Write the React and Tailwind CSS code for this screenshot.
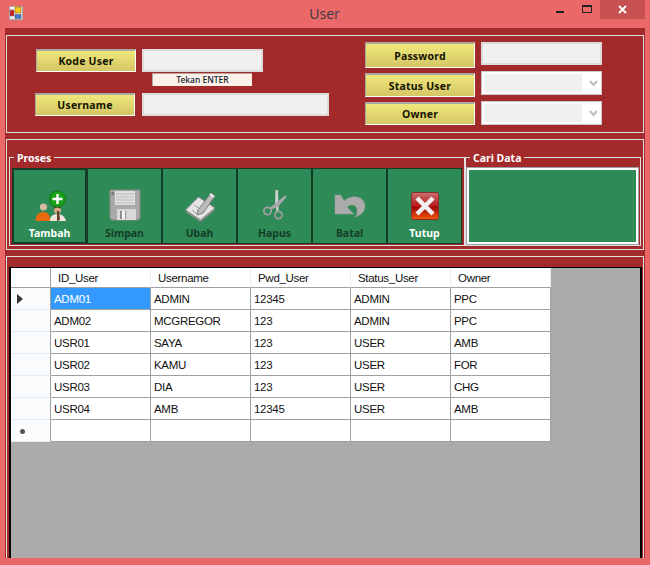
const comic = "font-['Noto_Sans',sans-serif] font-bold";
const sans = "font-['Liberation_Sans',Arial,sans-serif]";

const rows = [
  ["ADM01", "ADMIN", "12345", "ADMIN", "PPC"],
  ["ADM02", "MCGREGOR", "123", "ADMIN", "PPC"],
  ["USR01", "SAYA", "123", "USER", "AMB"],
  ["USR02", "KAMU", "123", "USER", "FOR"],
  ["USR03", "DIA", "123", "USER", "CHG"],
  ["USR04", "AMB", "12345", "USER", "AMB"],
  ["", "", "", "", ""],
];
const heads = ["ID_User", "Username", "Pwd_User", "Status_User", "Owner"];

function AppIcon() {
  return (
    <svg width="14" height="14" viewBox="0 0 14 14">
      <rect x="0.5" y="0.5" width="13" height="13" fill="#eee" stroke="#aaa" />
      <rect x="1" y="4" width="4" height="6" fill="#c62020" stroke="#777" strokeWidth="0.5" />
      <rect x="6" y="1" width="6" height="6" fill="#f5c518" stroke="#a07010" strokeWidth="0.6" />
      <rect x="6" y="8.5" width="6" height="4" fill="#3f78d0" stroke="#555" strokeWidth="0.5" />
    </svg>
  );
}

function Label({ children, className }) {
  return (
    <div className={`flex items-center justify-center pt-[2px] bg-gradient-to-b from-[#efe87a] to-[#d5c566] border-t-2 border-l border-t-[#a8a8a0] border-l-[#a8a8a0] border-b border-r border-b-white border-r-white text-[10.5px] tracking-[0.2px] text-[#141400] ${comic} ${className}`}>
      {children}
    </div>
  );
}

function Input({ className }) {
  return <div className={`border-2 border-[#dcdcdc] bg-[#f0f0f0] ${className}`} />;
}

function Select({ className }) {
  return (
    <div className={`flex items-center w-[121px] h-[24px] bg-white border border-[#c8c8c8] pl-[2px] ${className}`}>
      <div className="w-[98px] h-[18px] bg-[#f0f0f0]" />
      <svg className="ml-[7px]" width="9" height="7" viewBox="0 0 9 7">
        <path d="M1 1 L4.5 5 L8 1" fill="none" stroke="#bdbdbd" strokeWidth="2" />
      </svg>
    </div>
  );
}

function IconTambah() {
  return (
    <svg width="36" height="36" viewBox="0 0 36 36">
      <circle cx="11.5" cy="19" r="3.6" fill="#d8b8a0" />
      <path d="M3.5 33 C3.5 27 7 24 11.5 24 C15 24 18.5 27 18.5 33 Z" fill="#ea6a10" />
      <path d="M18 33 C18 28 21 26 25.5 26 C30 26 33 29 34 33 Z" fill="#f0e6dc" />
      <circle cx="25.5" cy="22" r="3.6" fill="#d8a888" />
      <path d="M25 23 L27 23 L28 32 L25 33 Z" fill="#6a3a20" />
      <path d="M22 21 C22 16 29 16 29 21 C27 19 24 19 22 21 Z" fill="#5a3018" />
      <circle cx="25.5" cy="11" r="8" fill="#18a018" stroke="#0c7a10" />
      <path d="M25.5 6 V16 M20.5 11 H30.5" stroke="#fff" strokeWidth="2.4" />
    </svg>
  );
}

function IconSimpan() {
  return (
    <svg width="36" height="36" viewBox="0 0 36 36">
      <path d="M3 2 H33 V30 L31 32 H5 L3 30 Z" fill="#a9a9a9" stroke="#8b8b8b" />
      <rect x="8" y="3" width="20" height="14" fill="#dedede" />
      <path d="M9 6 H27 M9 9 H27 M9 12 H27 M9 15 H27" stroke="#bdbdbd" />
      <rect x="4.5" y="4" width="2" height="3" fill="#707070" />
      <rect x="10" y="21" width="19" height="11" fill="#d8d8d8" />
      <rect x="13" y="23" width="6" height="8" fill="#8e8e8e" />
      <rect x="15" y="23" width="3" height="8" fill="#f4f4f4" />
    </svg>
  );
}

function IconUbah() {
  return (
    <svg width="36" height="36" viewBox="0 0 36 36">
      <path d="M3.5 24 L16.5 12 L33 22 L18.5 34 Z" fill="#8e8e8e" />
      <path d="M3.5 22 L16.5 9 L33 20 L18.5 32 Z" fill="#e4e4e4" stroke="#8a8a8a" />
      <path d="M16 22 L29 5 L33 8 L21 25 L15 27 Z" fill="#bcbcbc" stroke="#7a7a7a" />
      <path d="M28 6 L32 9" stroke="#f2f2f2" strokeWidth="2" />
      <path d="M10 22 L16 27 M12 17 L17 20" stroke="#9a9a9a" />
    </svg>
  );
}

function IconHapus() {
  return (
    <svg width="36" height="36" viewBox="0 0 36 36">
      <path d="M18.5 2 L21 2 L21.5 17 L21.5 23 L19.5 23 L18 15 Z" fill="#cfcfcf" />
      <path d="M28.5 7 L29.5 9 L21 19 L14 21.5 L13 19.5 L19 15 Z" fill="#a8a8a8" />
      <circle cx="10.5" cy="23" r="3.6" fill="none" stroke="#a0a0a0" strokeWidth="1.8" />
      <circle cx="21.5" cy="27" r="3.6" fill="none" stroke="#a0a0a0" strokeWidth="1.8" />
    </svg>
  );
}

function IconBatal() {
  return (
    <svg width="36" height="36" viewBox="0 0 36 36">
      <path d="M3 7 L3 26 L22 26 L15 19 C20 15 26 17 25 25 C25 27 24 28 22 29 C29 28 33 23 33 18 C33 9 21 5 12 13 L9 7 Z" fill="#ababab" stroke="#9a9a9a" strokeWidth="0.5" />
    </svg>
  );
}

function IconTutup() {
  return (
    <svg width="36" height="36" viewBox="0 0 36 36">
      <defs>
        <linearGradient id="tutup" x1="0" y1="0" x2="0" y2="1">
          <stop offset="0" stopColor="#c87070" />
          <stop offset="0.5" stopColor="#b81a1a" />
          <stop offset="0.55" stopColor="#a00808" />
          <stop offset="1" stopColor="#f05a08" />
        </linearGradient>
      </defs>
      <rect x="4.5" y="4.5" width="27" height="27" rx="2" fill="url(#tutup)" stroke="#8a2a2a" />
      <path d="M10 10 L26 26 M26 10 L10 26" stroke="#f0eeee" strokeWidth="4.5" />
    </svg>
  );
}

const buttons = [
  { name: "Tambah", icon: <IconTambah />, text: "text-white", box: "border-2" },
  { name: "Simpan", icon: <IconSimpan />, text: "text-[#143d28]", box: "border" },
  { name: "Ubah", icon: <IconUbah />, text: "text-[#143d28]", box: "border" },
  { name: "Hapus", icon: <IconHapus />, text: "text-[#143d28]", box: "border" },
  { name: "Batal", icon: <IconBatal />, text: "text-[#143d28]", box: "border" },
  { name: "Tutup", icon: <IconTutup />, text: "text-white", box: "border" },
];

export default function App() {
  return (
    <div className="w-[650px] h-[565px] bg-[#eb6868] flex flex-col overflow-hidden">
      {/* TITLE BAR */}
      <div className="h-[28px] flex shrink-0">
        <div className="pl-[9px] pt-[6px]"><AppIcon /></div>
        <div className="flex-1 text-center pl-[70px] pt-[4px] text-[14px] leading-[20px] text-[#3a3a44] font-['Open_Sans',sans-serif]">User</div>
        <div className="flex items-start">
          <div className="w-[8px] h-[2px] bg-[#222] mt-[11px]" />
          <div className="w-[10px] h-[8px] border border-t-2 border-[#222] mt-[5px] ml-[18px]" />
          <div className="w-[45px] h-[19px] bg-[#c75050] ml-[8px] flex items-center justify-center">
            <svg width="9" height="9" viewBox="0 0 9 9">
              <path d="M1 1 L8 8 M8 1 L1 8" stroke="#fff" strokeWidth="1.8" />
            </svg>
          </div>
          <div className="w-[5px]" />
        </div>
      </div>

      {/* CLIENT */}
      <div className="mx-[5px] h-[530px] bg-[#a32a2a] pl-[1px] pr-[1px] pt-[7px] flex flex-col gap-[6px]">
        {/* INPUT PANEL */}
        <div className="h-[98px] w-[638px] border border-[#e0e0e0] flex shrink-0">
          <div className="w-[358px] pt-[13px] pl-[29px]">
            <div className="flex">
              <Label className="w-[100px] h-[23px]">Kode User</Label>
              <Input className="w-[121px] h-[23px] ml-[6px]" />
            </div>
            <div className="ml-[116px] mt-[1px] w-[100px] h-[13px] bg-[#fbf1e9] border-l border-t border-[#b0a8a0] text-[8.5px] leading-[12px] text-center text-[#101828] font-['Noto_Sans',sans-serif] font-medium">
              Tekan ENTER
            </div>
            <div className="flex mt-[7px] -ml-[1px]">
              <Label className="w-[100px] h-[23px]">Username</Label>
              <Input className="w-[187px] h-[23px] ml-[7px]" />
            </div>
          </div>
          <div className="pt-[6px]">
            <div className="flex items-start">
              <Label className="w-[110px] h-[26px]">Password</Label>
              <Input className="w-[121px] h-[23px] ml-[6px]" />
            </div>
            <div className="flex items-start mt-[3px]">
              <Label className="w-[110px] h-[24px] mt-[2px]">Status User</Label>
              <Select className="ml-[6px]" />
            </div>
            <div className="flex items-start mt-[4px]">
              <Label className="w-[110px] h-[23px] mt-[1px]">Owner</Label>
              <Select className="ml-[6px]" />
            </div>
          </div>
        </div>

        {/* ACTION PANEL */}
        <div className="h-[111px] w-[638px] border border-[#e0e0e0] pt-[17px] pl-[2px] flex shrink-0">
          <div className="relative w-[456px] h-[89px] border border-[#e0e0e0] pl-[2px] pt-[10px]">
            <span className={`absolute -top-[7px] left-[4px] px-[3px] bg-[#a32a2a] text-[10.5px] leading-[14px] text-white ${comic}`}>Proses</span>
            <div className="flex">
              {buttons.map((b) => (
                <div key={b.name} className={`w-[75px] h-[76px] bg-[#2e8b57] border-[#143d28] flex flex-col items-center ${b.box} ${b.name === "Tambah" ? "pt-[18px]" : "pt-[19px]"}`}>
                  {b.icon}
                  <div className={`mt-[2px] text-[10.5px] leading-[14px] ${b.text} ${comic}`}>{b.name}</div>
                </div>
              ))}
            </div>
          </div>
          <div className="relative w-[176px] h-[89px] border border-[#e0e0e0] pl-[1px] pt-[10px]">
            <span className={`absolute -top-[7px] left-[4px] px-[3px] bg-[#a32a2a] text-[10.5px] leading-[14px] text-white ${comic}`}>Cari Data</span>
            <div className="w-[171px] h-[76px] bg-[#2e8b57] border-2 border-white outline outline-1 outline-[#a0a0a8]" />
          </div>
        </div>

        {/* GRID PANEL */}
        <div className="flex-1 w-[638px] border-t border-l border-r border-[#e0e0e0] pt-[10px] pl-[2px] pr-[1px] flex flex-col min-h-0">
          <div className="flex-1 bg-[#ababab] border-t border-l-2 border-r-2 border-black min-h-0">
            <div className={`grid grid-cols-[40px_repeat(5,100px)] w-[540px] ${sans} text-[11.5px] tracking-[-0.3px] text-[#111]`}>
              <div className="h-[20px] bg-white border-r border-b border-r-[#a0a0a0] border-b-[#a0a0a0]" />
              {heads.map((h) => (
                <div key={h} className="h-[20px] bg-white border-r border-b border-r-[#e3ecf7] border-b-[#a0a0a0] pl-[7px] leading-[20px]">{h}</div>
              ))}
              {rows.map((r, i) => (
                <div key={i} className="contents">
                  <div className="h-[22px] bg-[#fbfcfe] border-r border-b border-r-[#a0a0a0] border-b-[#e3ecf7] flex items-center pl-[6px]">
                    {i === 0 && (
                      <svg width="6" height="10" viewBox="0 0 6 10"><path d="M0 0 L6 5 L0 10 Z" fill="#333" /></svg>
                    )}
                    {i === 6 && <span className="w-[5px] h-[5px] ml-[3px] mt-[2px] rounded-full bg-[#555]" />}
                  </div>
                  {r.map((c, j) => (
                    <div key={j} className={`h-[22px] border-r border-b border-[#a0a0a0] pl-[3px] leading-[22px] ${i === 0 && j === 0 ? "bg-[#3399ff] text-white" : "bg-white"}`}>{c}</div>
                  ))}
                </div>
              ))}
            </div>
          </div>
        </div>
      </div>
    </div>
  );
}
